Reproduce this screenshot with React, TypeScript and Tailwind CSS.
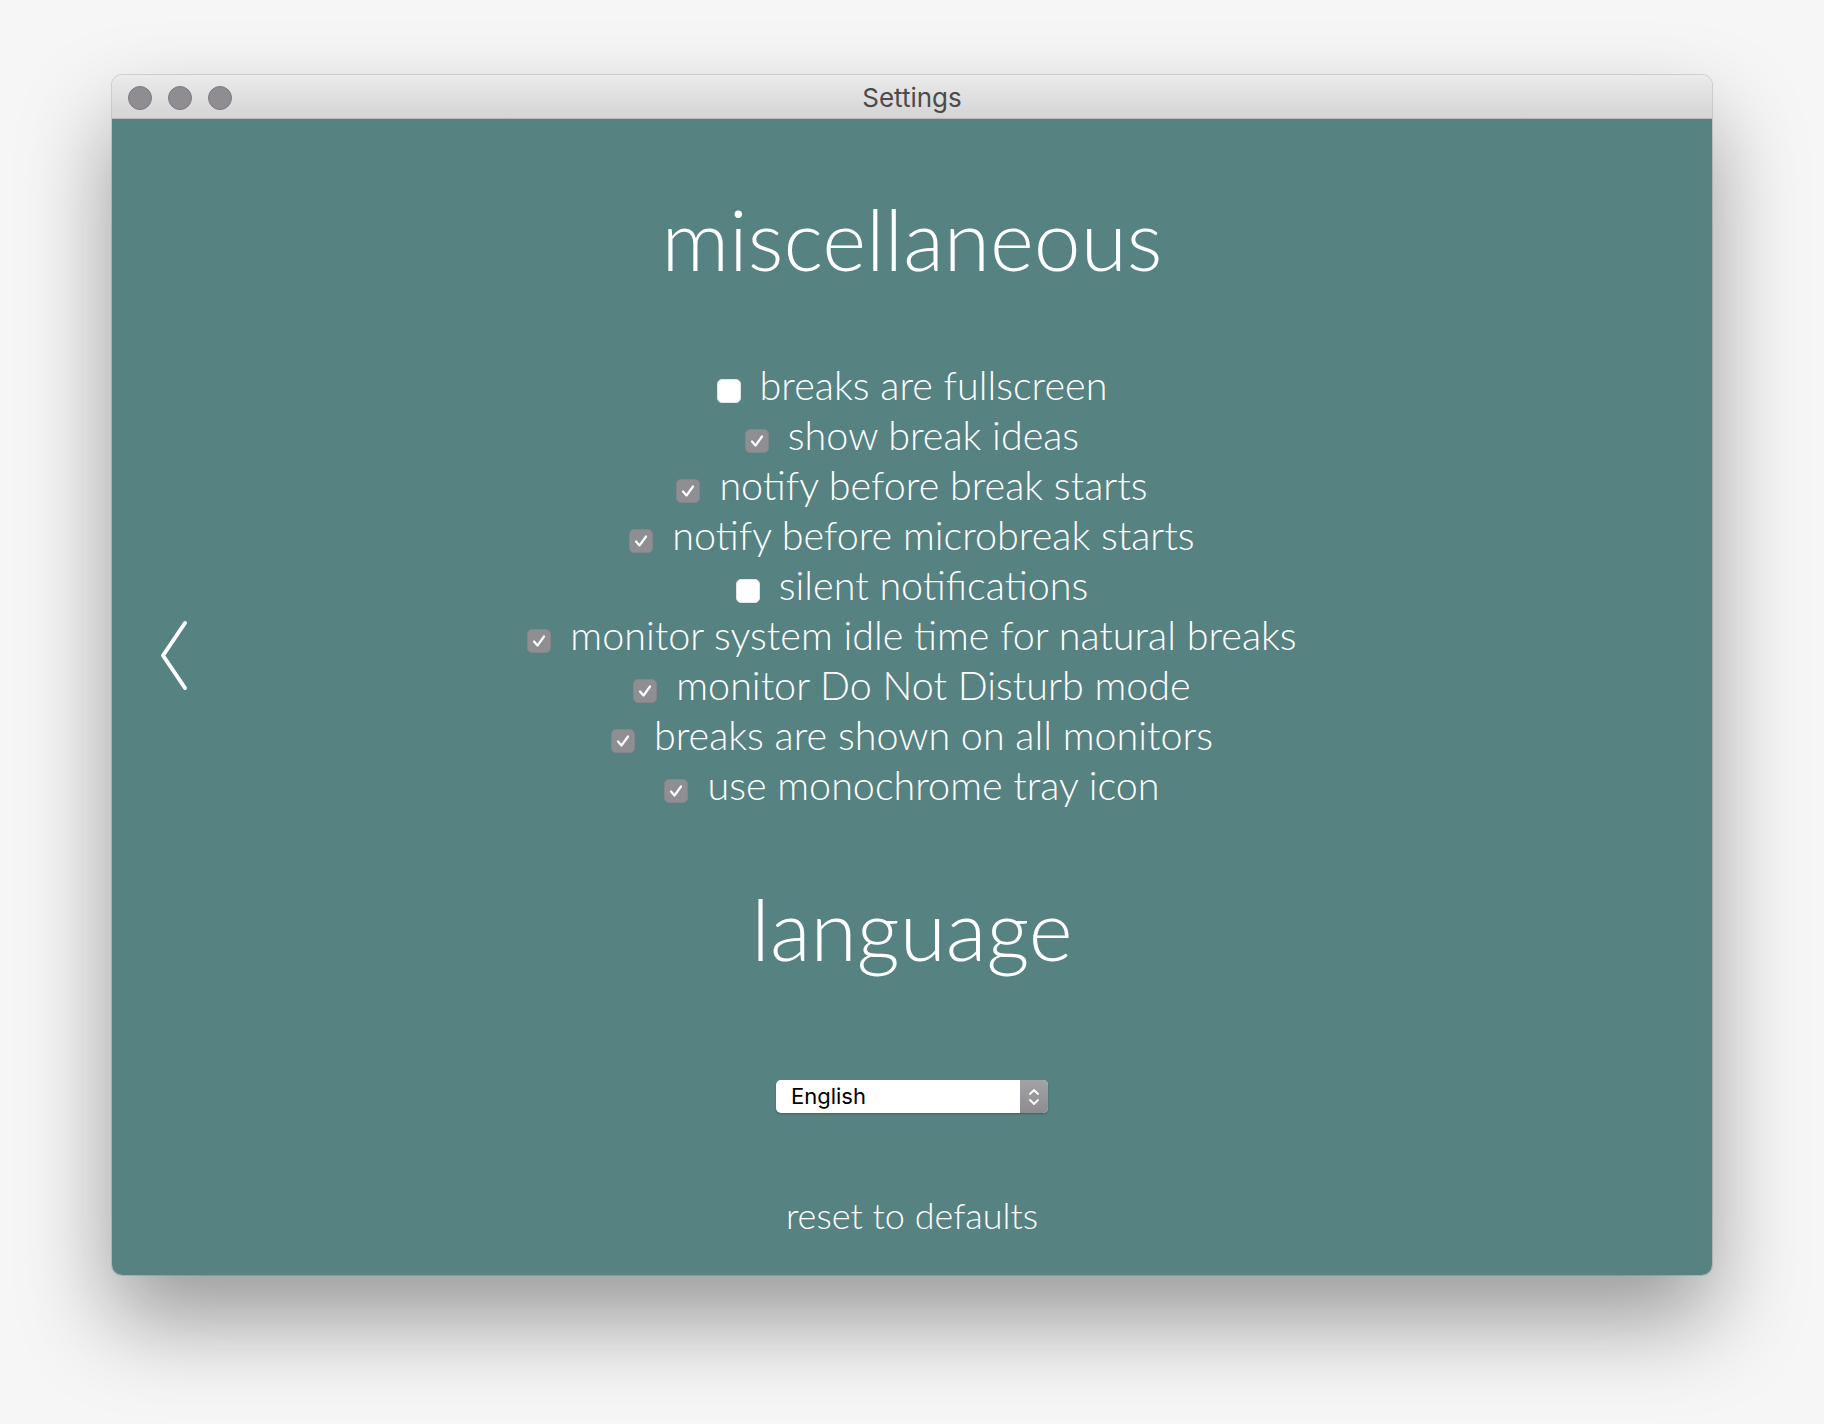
import React, { useState } from 'react';

type Option = { label: string; checked: boolean };

const OPTIONS: Option[] = [
  { label: 'breaks are fullscreen', checked: false },
  { label: 'show break ideas', checked: true },
  { label: 'notify before break starts', checked: true },
  { label: 'notify before microbreak starts', checked: true },
  { label: 'silent notifications', checked: false },
  { label: 'monitor system idle time for natural breaks', checked: true },
  { label: 'monitor Do Not Disturb mode', checked: true },
  { label: 'breaks are shown on all monitors', checked: true },
  { label: 'use monochrome tray icon', checked: true },
];

const CheckBox: React.FC<{ checked: boolean; onClick: () => void }> = ({ checked, onClick }) => (
  <button
    onClick={onClick}
    className={`mt-[12px] w-[24px] h-[24px] rounded-[5px] flex items-center justify-center shrink-0 ${
      checked ? 'bg-[#8f8e93] border border-[#86858a]' : 'bg-white border border-[#e4e4e4]'
    }`}
  >
    {checked && (
      <svg width="18" height="18" viewBox="0 0 18 18" fill="none">
        <path d="M4 9.5 L7.5 13.5 L14 4.5" stroke="white" strokeWidth="2.2" strokeLinecap="round" strokeLinejoin="round" />
      </svg>
    )}
  </button>
);

export default function App() {
  const [opts, setOpts] = useState(OPTIONS);

  const toggle = (i: number) =>
    setOpts(opts.map((o, idx) => (idx === i ? { ...o, checked: !o.checked } : o)));

  return (
    <div className="w-[1824px] h-[1424px] bg-[#f6f6f6] pt-[75px] pl-[112px]">
      <div className="w-[1600px] h-[1200px] rounded-[10px] overflow-hidden flex flex-col shadow-[0_45px_90px_rgba(0,0,0,0.38),0_0_0_1px_rgba(0,0,0,0.12)]">
        {/* title bar */}
        <div className="relative h-[44px] shrink-0 flex items-center justify-center bg-gradient-to-b from-[#ebebeb] to-[#d4d4d4] border-b border-[#b9b9b9]">
          <div className="absolute left-[16px] top-[11px] flex gap-[16px]">
            <span className="w-[24px] h-[24px] rounded-full bg-[#8f8d92] border border-[#7c7a7f]" />
            <span className="w-[24px] h-[24px] rounded-full bg-[#8f8d92] border border-[#7c7a7f]" />
            <span className="w-[24px] h-[24px] rounded-full bg-[#8f8d92] border border-[#7c7a7f]" />
          </div>
          <span className="text-[26px] text-[#4b4b4b] font-['Inter',sans-serif] mt-[2px]">Settings</span>
        </div>

        {/* content */}
        <div className="relative flex-1 bg-[#568282] flex flex-col items-center text-white font-['Lato',sans-serif] font-light pt-[78px]">
          <button className="absolute left-[48px] top-[501px]">
            <svg width="30" height="72" viewBox="0 0 30 72" fill="none">
              <path d="M25 3 L3 35.5 L25 68" stroke="white" strokeWidth="4" strokeLinecap="round" strokeLinejoin="round" />
            </svg>
          </button>

          <h1 className="text-[84px] leading-none">miscellaneous</h1>

          <div className="mt-[79px] flex flex-col items-center">
            {opts.map((o, i) => (
              <label key={o.label} className="flex items-center gap-[19px] h-[50px]">
                <CheckBox checked={o.checked} onClick={() => toggle(i)} />
                <span className="text-[39.5px] leading-[50px]">{o.label}</span>
              </label>
            ))}
          </div>

          <h1 className="mt-[77px] text-[84px] leading-none">language</h1>

          <div className="mt-[109px] w-[272px] h-[33px] rounded-[5px] bg-white flex overflow-hidden shadow-[0_1px_2px_rgba(0,0,0,0.25)]">
            <span className="flex-1 pl-[15px] text-[22px] leading-[33px] text-black font-normal font-['Inter',sans-serif]">English</span>
            <span className="w-[28px] h-full bg-gradient-to-b from-[#a3a2a7] to-[#8d8c91] flex items-center justify-center">
              <svg width="14" height="22" viewBox="0 0 14 22" fill="none">
                <path d="M3 8 L7 4 L11 8" stroke="white" strokeWidth="1.8" strokeLinecap="round" strokeLinejoin="round" />
                <path d="M3 14 L7 18 L11 14" stroke="white" strokeWidth="1.8" strokeLinecap="round" strokeLinejoin="round" />
              </svg>
            </span>
          </div>

          <button className="mt-[84px] text-[36px] leading-none">reset to defaults</button>
        </div>
      </div>
    </div>
  );
}
